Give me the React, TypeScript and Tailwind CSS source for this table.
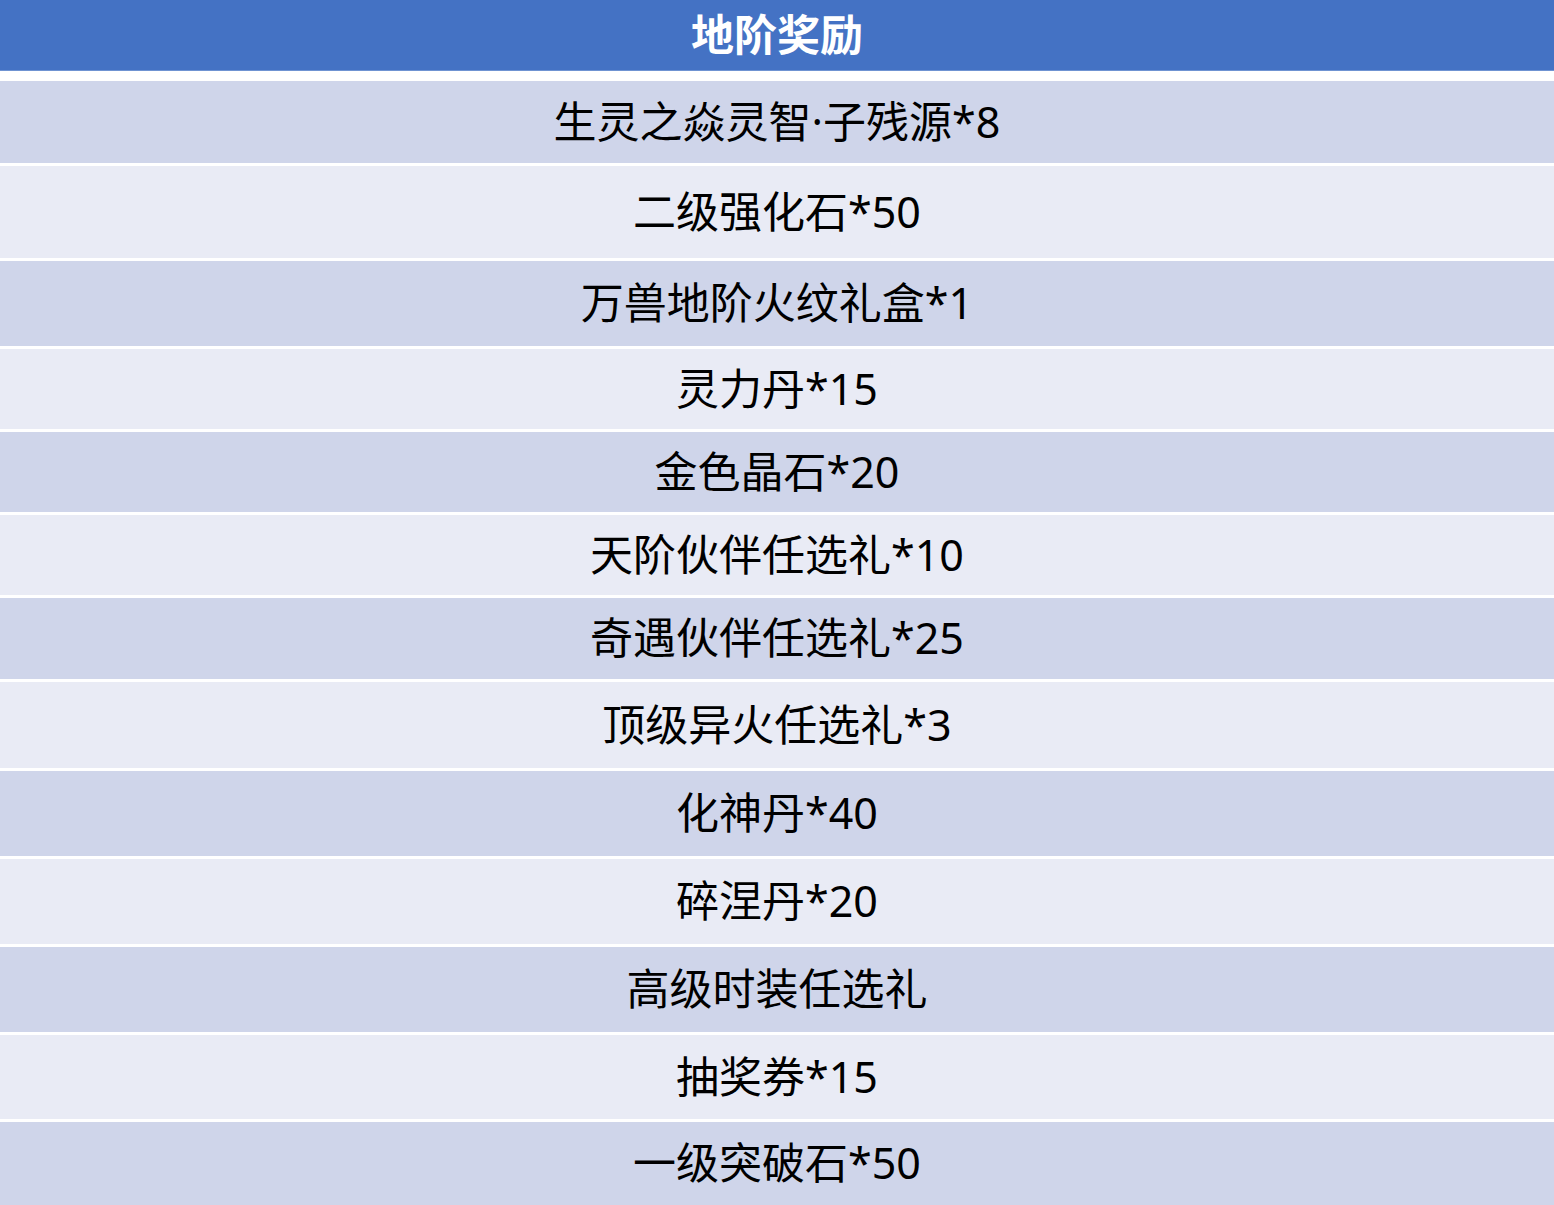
const rows: { text: string; h: string; bg: string }[] = [
  { text: "生灵之焱灵智·子残源*8", h: "h-[82px]", bg: "bg-[#cfd5ea]" },
  { text: "二级强化石*50", h: "h-[92px]", bg: "bg-[#e9ebf5]" },
  { text: "万兽地阶火纹礼盒*1", h: "h-[85px]", bg: "bg-[#cfd5ea]" },
  { text: "灵力丹*15", h: "h-[80px]", bg: "bg-[#e9ebf5]" },
  { text: "金色晶石*20", h: "h-[80px]", bg: "bg-[#cfd5ea]" },
  { text: "天阶伙伴任选礼*10", h: "h-[80px]", bg: "bg-[#e9ebf5]" },
  { text: "奇遇伙伴任选礼*25", h: "h-[81px]", bg: "bg-[#cfd5ea]" },
  { text: "顶级异火任选礼*3", h: "h-[86px]", bg: "bg-[#e9ebf5]" },
  { text: "化神丹*40", h: "h-[85px]", bg: "bg-[#cfd5ea]" },
  { text: "碎涅丹*20", h: "h-[85px]", bg: "bg-[#e9ebf5]" },
  { text: "高级时装任选礼", h: "h-[85px]", bg: "bg-[#cfd5ea]" },
  { text: "抽奖券*15", h: "h-[84px]", bg: "bg-[#e9ebf5]" },
  { text: "一级突破石*50", h: "h-[83px]", bg: "bg-[#cfd5ea]" },
];

export default function App() {
  return (
    <div className="w-[1554px] h-[1205px] overflow-hidden bg-white font-['Noto_Sans','Noto_Sans_CJK_SC',sans-serif]">
      <div className="h-[71px] bg-[#4472c4] border-b border-[#6f93d2] flex items-center justify-center">
        <span className="text-[43px] font-bold text-white leading-none -mt-[6px] font-['Noto_Sans_CJK_SC',sans-serif]">地阶奖励</span>
      </div>
      <div className="mt-[10px] flex flex-col gap-[3px]">
        {rows.map((row, i) => (
          <div key={i} className={`${row.h} ${row.bg} flex items-center justify-center`}>
            <span className="text-[43px] text-black leading-none -mt-[2px]">{row.text}</span>
          </div>
        ))}
      </div>
    </div>
  );
}
